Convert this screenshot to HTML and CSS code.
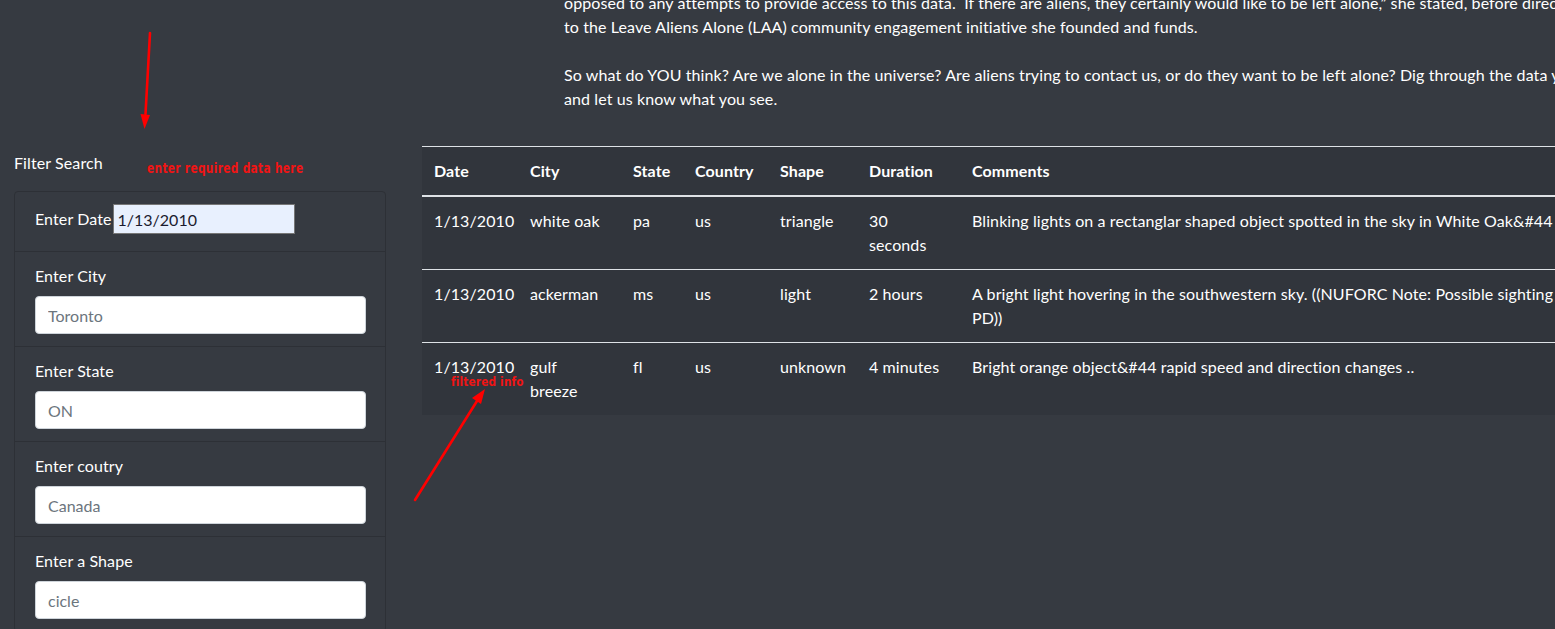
FILE: index.html
```html
<!DOCTYPE html>
<html lang="en">
<head>
<meta charset="utf-8">
<title>UFO Sightings</title>
<link rel="stylesheet" href="styles.css">
</head>
<body>
<div class="page">
  <aside class="sidebar">
    <div class="filter-title">Filter Search</div>
    <div class="card">
      <ul class="list-group">
        <li class="item item-inline">
          <label class="item-label-inline" for="datetime">Enter Date</label>
          <input class="date-input" id="datetime" type="text" value="1/13/2010">
        </li>
        <li class="item">
          <label class="item-label" for="city">Enter City</label>
          <input class="form-control" id="city" type="text" placeholder="Toronto">
        </li>
        <li class="item">
          <label class="item-label" for="state">Enter State</label>
          <input class="form-control" id="state" type="text" placeholder="ON">
        </li>
        <li class="item">
          <label class="item-label" for="country">Enter coutry</label>
          <input class="form-control" id="country" type="text" placeholder="Canada">
        </li>
        <li class="item">
          <label class="item-label" for="shape">Enter a Shape</label>
          <input class="form-control" id="shape" type="text" placeholder="cicle">
        </li>
      </ul>
    </div>
  </aside>

  <main class="main">
    <article class="intro">
      <p>opposed to any attempts to provide access to this data. &nbsp;If there are aliens, they certainly would like to be left alone,” she stated, before directing our reporter<br>to the Leave Aliens Alone (LAA) community engagement initiative she founded and funds.</p>
      <p>So what do YOU think? Are we alone in the universe? Are aliens trying to contact us, or do they want to be left alone? Dig through the data yourself<br>and let us know what you see.</p>
    </article>

    <table class="table">
      <colgroup>
        <col class="col-date">
        <col class="col-city">
        <col class="col-state">
        <col class="col-country">
        <col class="col-shape">
        <col class="col-duration">
        <col class="col-comments">
      </colgroup>
      <thead>
        <tr>
          <th>Date</th>
          <th>City</th>
          <th>State</th>
          <th>Country</th>
          <th>Shape</th>
          <th>Duration</th>
          <th>Comments</th>
        </tr>
      </thead>
      <tbody>
        <tr>
          <td>1/13/2010</td>
          <td>white oak</td>
          <td>pa</td>
          <td>us</td>
          <td>triangle</td>
          <td>30<br>seconds</td>
          <td>Blinking lights on a rectanglar shaped object spotted in the sky in White Oak&amp;#44 &nbsp;Pennsylvania.</td>
        </tr>
        <tr>
          <td>1/13/2010</td>
          <td>ackerman</td>
          <td>ms</td>
          <td>us</td>
          <td>light</td>
          <td>2 hours</td>
          <td>A bright light hovering in the southwestern sky. ((NUFORC Note: Possible sighting of Venus?&nbsp;<br>PD))</td>
        </tr>
        <tr>
          <td>1/13/2010</td>
          <td>gulf<br>breeze</td>
          <td>fl</td>
          <td>us</td>
          <td>unknown</td>
          <td>4 minutes</td>
          <td>Bright orange object&amp;#44 rapid speed and direction changes ..</td>
        </tr>
      </tbody>
    </table>
  </main>
</div>

<svg class="annotations" width="1555" height="629" viewBox="0 0 1555 629" aria-hidden="true">
  <line x1="150" y1="33" x2="145.5" y2="114" stroke="#f00" stroke-width="2.6" stroke-linecap="round"/>
  <polygon points="140.5,114 150,115 144.5,129" fill="#f00"/>
  <line x1="415" y1="500" x2="477" y2="401" stroke="#f00" stroke-width="2.6" stroke-linecap="round"/>
  <polygon points="472,398 481,404 485,389" fill="#f00"/>
</svg>
<span class="note note-enter">enter required data here</span>
<span class="note note-filtered">filtered info</span>
</body>
</html>
```

FILE: styles.css
```css
html, body {
  margin: 0;
  padding: 0;
}

body {
  background: #363a41;
  color: #ffffff;
  font-family: "Lato", "Liberation Sans", sans-serif;
  font-size: 16px;
  line-height: 24px;
  letter-spacing: 0.1px;
  overflow: hidden;
  width: 1555px;
  height: 629px;
  position: relative;
}

.page {
  display: flex;
  align-items: flex-start;
}

/* ---------- sidebar ---------- */
.sidebar {
  flex: 0 0 387px;
  box-sizing: border-box;
  padding: 151px 0 0 14px;
}

.filter-title {
  line-height: 24px;
  margin-bottom: 16px;
}

.card {
  width: 372px;
  box-sizing: border-box;
  border: 1px solid #2d3036;
  border-radius: 4px;
  background: #363a41;
}

.list-group {
  list-style: none;
  margin: 0;
  padding: 0;
}

.item {
  display: flex;
  flex-direction: column;
  padding: 12px 20px;
  border-top: 1px solid #2d3036;
}

.item:first-child {
  border-top: 0;
}

.item-inline {
  flex-direction: row;
  align-items: center;
  gap: 1px;
  padding: 12px 20px 17px;
}

.item-label-inline {
  line-height: 24px;
}

.item-label {
  line-height: 24px;
  margin-bottom: 8px;
}

.date-input {
  box-sizing: border-box;
  width: 182px;
  height: 30px;
  padding: 1px 4px;
  border: 1px solid #767676;
  border-radius: 0;
  background: #e8f0fe;
  color: #1b1b2f;
  font-family: inherit;
  font-size: 16px;
}

.form-control {
  box-sizing: border-box;
  width: 331px;
  height: 38px;
  padding: 6px 12px;
  border: 1px solid #ced4da;
  border-radius: 4px;
  background: #ffffff;
  color: #495057;
  font-family: inherit;
  font-size: 16px;
}

.form-control::placeholder {
  color: #6c757d;
  opacity: 1;
}

/* ---------- main ---------- */
.main {
  flex: 1 0 auto;
  padding-left: 35px;
}

.intro {
  margin: -9px 0 35px 142px;
  white-space: nowrap;
}

.intro p {
  margin: 0 0 24px;
}

.intro p:last-child {
  margin-bottom: 0;
}

.table {
  border-collapse: collapse;
  table-layout: fixed;
  width: 1438px;
  background: #31353c;
  border-top: 1px solid #dee2e6;
}

.col-date { width: 96px; }
.col-city { width: 103px; }
.col-state { width: 62px; }
.col-country { width: 85px; }
.col-shape { width: 89px; }
.col-duration { width: 103px; }
.col-comments { width: 900px; }

.table th,
.table td {
  padding: 12px;
  text-align: left;
  vertical-align: top;
  white-space: nowrap;
  line-height: 24px;
}

.table th {
  font-weight: 700;
  border-bottom: 2px solid #dee2e6;
}

.table tbody tr + tr td {
  border-top: 1px solid #dee2e6;
}

/* ---------- annotations ---------- */
.annotations {
  position: absolute;
  left: 0;
  top: 0;
  pointer-events: none;
}

.note {
  position: absolute;
  color: #f01414;
  font-family: "DejaVu Sans Condensed", "DejaVu Sans", sans-serif;
  font-stretch: condensed;
  font-weight: 700;
  white-space: nowrap;
  transform-origin: left center;
}

.note-enter {
  left: 147px;
  top: 158px;
  font-size: 14px;
  line-height: 20px;
  letter-spacing: 0.4px;
  transform: scaleX(0.84);
}

.note-filtered {
  left: 451px;
  top: 373px;
  font-size: 13px;
  line-height: 18px;
  letter-spacing: 0.2px;
  transform: scaleX(0.9);
}
```
